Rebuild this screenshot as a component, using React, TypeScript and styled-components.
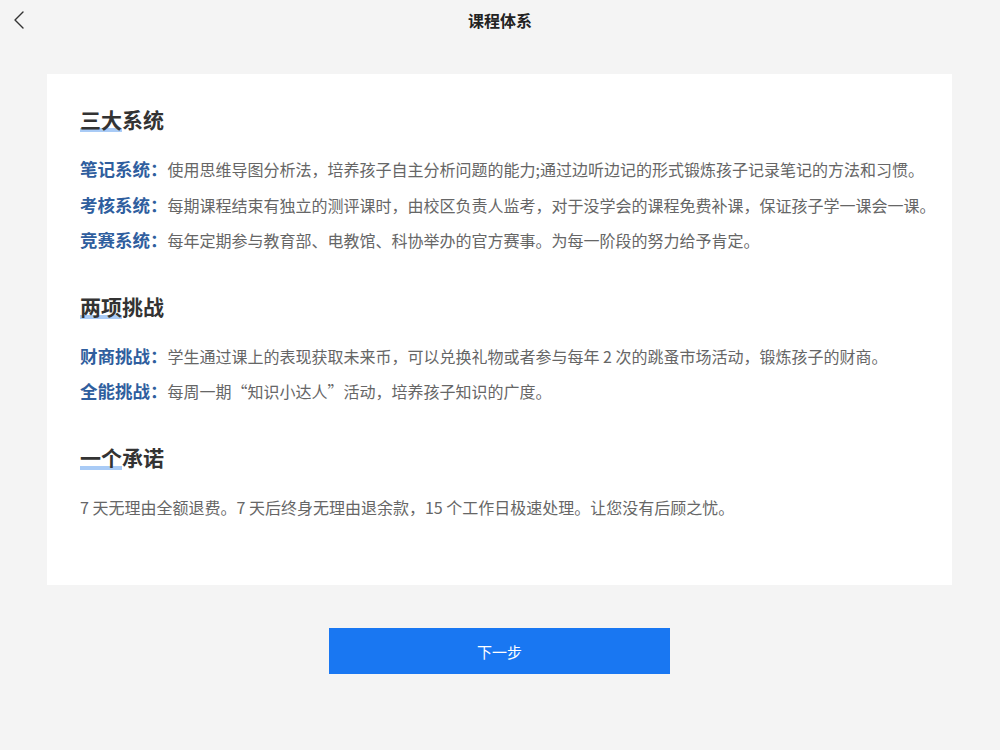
import React from "react";
import styled, { createGlobalStyle } from "styled-components";

const GlobalStyle = createGlobalStyle`
  html, body {
    margin: 0;
    padding: 0;
    background: #f4f4f4;
    font-family: "Noto Sans CJK SC", "Noto Sans", "Liberation Sans", sans-serif;
  }
`;

const Page = styled.div`
  width: 1000px;
  min-height: 750px;
  background: #f4f4f4;
  box-sizing: border-box;
`;

const Header = styled.header`
  position: relative;
  height: 40px;
  display: flex;
  align-items: center;
  justify-content: center;
`;

const BackButton = styled.div`
  position: absolute;
  left: 10px;
  top: 10px;
  width: 20px;
  height: 20px;
  display: flex;
  align-items: center;
  justify-content: center;
`;

const Title = styled.h1`
  margin: 0;
  font-size: 16px;
  font-weight: 700;
  color: #222;
  line-height: 40px;
`;

const Card = styled.main`
  margin: 34px 48px 0 47px;
  background: #fff;
  padding: 30px 33px 60px;
  box-sizing: border-box;
`;

const Section = styled.section`
  & + & {
    margin-top: 32px;
  }
`;

const Heading = styled.h2`
  margin: 0 0 18px;
  height: 30px;
  line-height: 30px;
  font-size: 21px;
  font-weight: 600;
  color: #333;
`;

const HeadingMark = styled.span`
  position: relative;
  display: inline-block;
  &::after {
    content: "";
    position: absolute;
    left: 0;
    right: 0;
    bottom: 2px;
    height: 4px;
    background: #a9cbf6;
  }
`;

const MarkText = styled.span`
  position: relative;
  z-index: 1;
`;

const Line = styled.p`
  margin: 0;
  height: 35.5px;
  line-height: 35.5px;
  font-size: 16px;
  color: #666;
  white-space: nowrap;
`;

const Label = styled.span`
  font-size: 17.5px;
  line-height: 1;
  font-weight: 600;
  color: #2f5e9e;
`;

const Footer = styled.div`
  display: flex;
  justify-content: center;
  margin-top: 43px;
`;

const NextButton = styled.button`
  width: 341px;
  height: 46px;
  margin-left: -1px;
  border: none;
  border-radius: 0;
  background: #1977f2;
  color: #fff;
  font-family: inherit;
  font-size: 15px;
  cursor: pointer;
`;

interface SectionHeadingProps {
  marked: string;
  rest: string;
}

function SectionHeading({ marked, rest }: SectionHeadingProps) {
  return (
    <Heading>
      <HeadingMark>
        <MarkText>{marked}</MarkText>
      </HeadingMark>
      {rest}
    </Heading>
  );
}

interface ItemProps {
  label?: string;
  text: string;
}

function Item({ label, text }: ItemProps) {
  return (
    <Line>
      {label && <Label>{label}：</Label>}
      {text}
    </Line>
  );
}

export default function App() {
  return (
    <Page>
      <GlobalStyle />
      <Header>
        <BackButton>
          <svg width="14" height="18" viewBox="0 0 14 18" fill="none">
            <polyline
              points="10,1 2,9 10,17"
              stroke="#333"
              strokeWidth="1.4"
              strokeLinecap="round"
              strokeLinejoin="round"
            />
          </svg>
        </BackButton>
        <Title>课程体系</Title>
      </Header>
      <Card>
        <Section>
          <SectionHeading marked="三大" rest="系统" />
          <Item
            label="笔记系统"
            text="使用思维导图分析法，培养孩子自主分析问题的能力;通过边听边记的形式锻炼孩子记录笔记的方法和习惯。"
          />
          <Item
            label="考核系统"
            text="每期课程结束有独立的测评课时，由校区负责人监考，对于没学会的课程免费补课，保证孩子学一课会一课。"
          />
          <Item
            label="竞赛系统"
            text="每年定期参与教育部、电教馆、科协举办的官方赛事。为每一阶段的努力给予肯定。"
          />
        </Section>
        <Section>
          <SectionHeading marked="两项" rest="挑战" />
          <Item
            label="财商挑战"
            text="学生通过课上的表现获取未来币，可以兑换礼物或者参与每年 2 次的跳蚤市场活动，锻炼孩子的财商。"
          />
          <Item
            label="全能挑战"
            text="每周一期“知识小达人”活动，培养孩子知识的广度。"
          />
        </Section>
        <Section>
          <SectionHeading marked="一个" rest="承诺" />
          <Item text="7 天无理由全额退费。7 天后终身无理由退余款，15 个工作日极速处理。让您没有后顾之忧。" />
        </Section>
      </Card>
      <Footer>
        <NextButton>下一步</NextButton>
      </Footer>
    </Page>
  );
}
